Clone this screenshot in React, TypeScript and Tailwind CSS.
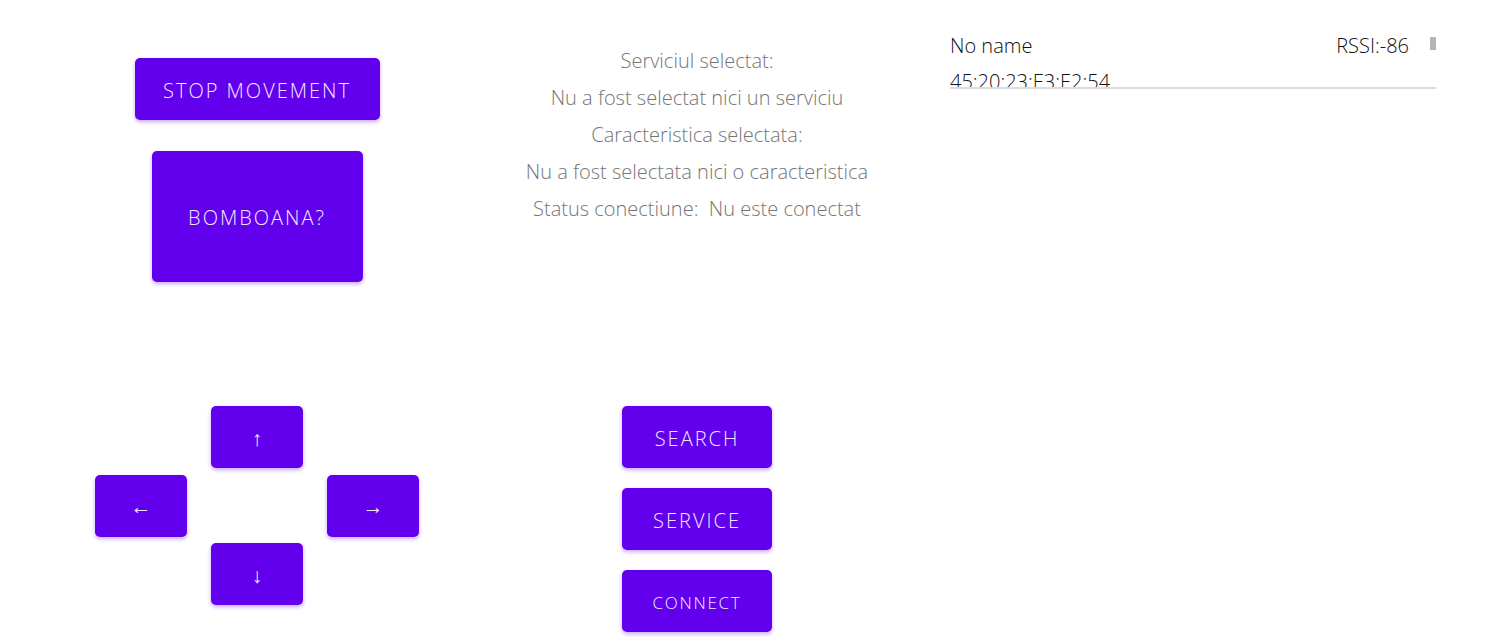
import React from "react";

const btn =
  "flex items-center justify-center bg-[#6200ee] text-[#f3e8ff] rounded-[5px] shadow-[0_2px_4px_rgba(98,0,238,0.35)] font-light tracking-[0.1em] pt-[3px]";

export default function App() {
  const font = { fontFamily: '"Open Sans", "Noto Sans", sans-serif' };
  return (
    <div className="w-[1487px] h-[637px] bg-white overflow-hidden flex" style={font}>
      {/* Column 1 */}
      <div className="w-[514px] flex flex-col items-center pt-[58px]">
        <div className={`${btn} w-[245px] h-[62px] text-[20px]`}>STOP MOVEMENT</div>
        <div className={`${btn} w-[211px] h-[131px] mt-[31px] text-[20px]`}>BOMBOANA?</div>
        <div className="mt-[124px] grid grid-cols-[92px_92px_92px] grid-rows-[62px_62px_62px] gap-x-[24px] gap-y-[6.5px]">
          <div />
          <div className={`${btn} text-[21px] tracking-normal`}>↑</div>
          <div />
          <div className={`${btn} text-[21px] tracking-normal`}>←</div>
          <div />
          <div className={`${btn} text-[21px] tracking-normal`}>→</div>
          <div />
          <div className={`${btn} text-[21px] tracking-normal`}>↓</div>
          <div />
        </div>
      </div>

      {/* Column 2 */}
      <div className="w-[366px] flex flex-col items-center pt-[42px]">
        <div className="flex flex-col items-center text-[20px] leading-[37px] font-light text-[#757575] whitespace-nowrap">
          <div>Serviciul selectat:</div>
          <div>Nu a fost selectat nici un serviciu</div>
          <div>Caracteristica selectata:</div>
          <div>Nu a fost selectata nici o caracteristica</div>
          <div>Status conectiune:&nbsp; Nu este conectat</div>
        </div>
        <div className="mt-[179px] flex flex-col gap-[20px]">
          <div className={`${btn} w-[150px] h-[62px] text-[20px]`}>SEARCH</div>
          <div className={`${btn} w-[150px] h-[62px] text-[20px]`}>SERVICE</div>
          <div className={`${btn} w-[150px] h-[62px] text-[17px]`}>CONNECT</div>
        </div>
      </div>

      {/* Column 3 */}
      <div className="ml-[70px] w-[486px] pt-[28px]">
        <div className="relative h-[61px] overflow-hidden border-b-2 border-[#dcdcdc]">
          <div className="pt-[4px] pr-[27px] text-[20px] font-light text-[#111111]">
            <div className="flex justify-between leading-[28px]">
              <span>No name</span>
              <span>RSSI:-86</span>
            </div>
            <div className="leading-[28px] mt-[8px]">45:20:23:E3:E2:54</div>
          </div>
          <div className="absolute right-0 top-[9px] w-[6px] h-[13px] bg-[#b5b5b5]" />
        </div>
      </div>
    </div>
  );
}
